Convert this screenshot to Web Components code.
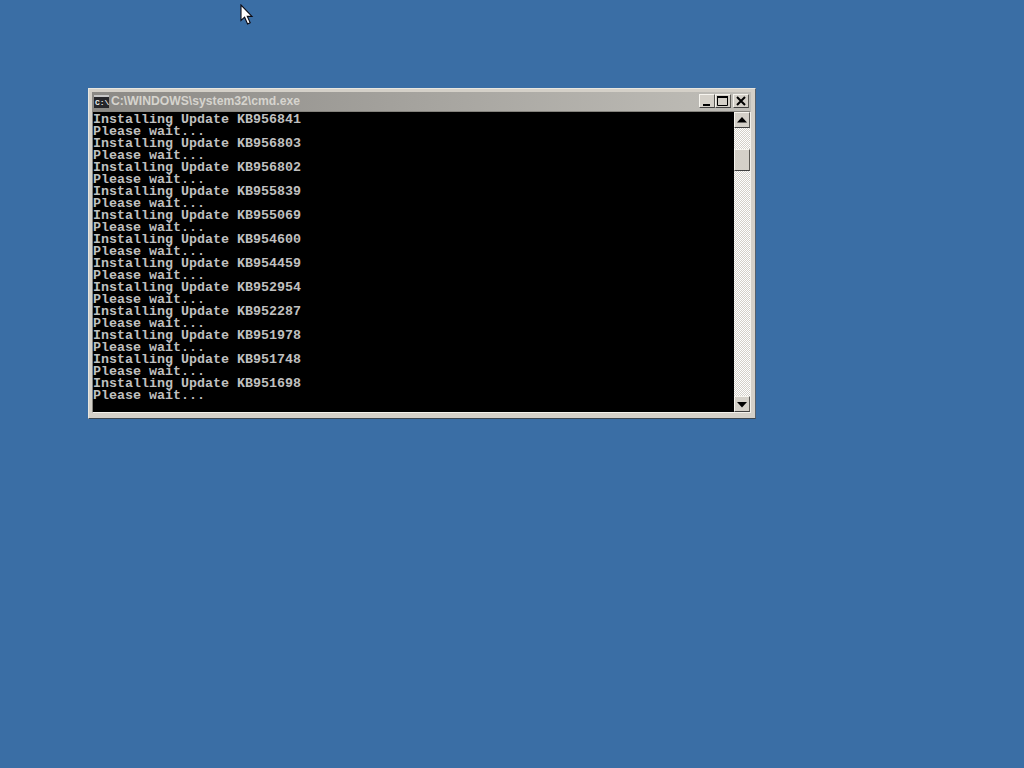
<!DOCTYPE html>
<html>
<head>
<meta charset="utf-8">
<title>cmd.exe</title>
<style>
  html, body { margin: 0; height: 100%; background: #3a6ea5; overflow: hidden; }
</style>
</head>
<body>
<desktop-screen>
  <cmd-window title-text="C:\WINDOWS\system32\cmd.exe">
    <console-line>Installing Update KB956841</console-line>
    <console-line>Please wait...</console-line>
    <console-line>Installing Update KB956803</console-line>
    <console-line>Please wait...</console-line>
    <console-line>Installing Update KB956802</console-line>
    <console-line>Please wait...</console-line>
    <console-line>Installing Update KB955839</console-line>
    <console-line>Please wait...</console-line>
    <console-line>Installing Update KB955069</console-line>
    <console-line>Please wait...</console-line>
    <console-line>Installing Update KB954600</console-line>
    <console-line>Please wait...</console-line>
    <console-line>Installing Update KB954459</console-line>
    <console-line>Please wait...</console-line>
    <console-line>Installing Update KB952954</console-line>
    <console-line>Please wait...</console-line>
    <console-line>Installing Update KB952287</console-line>
    <console-line>Please wait...</console-line>
    <console-line>Installing Update KB951978</console-line>
    <console-line>Please wait...</console-line>
    <console-line>Installing Update KB951748</console-line>
    <console-line>Please wait...</console-line>
    <console-line>Installing Update KB951698</console-line>
    <console-line>Please wait...</console-line>
  </cmd-window>
</desktop-screen>
<script>
class DesktopScreen extends HTMLElement {
  constructor() {
    super();
    this.attachShadow({mode: 'open'}).innerHTML = `
      <style>
        :host { display: block; position: relative; width: 1024px; height: 768px; background: #3a6ea5; overflow: hidden; }
        ::slotted(cmd-window) { position: absolute; left: 88px; top: 88px; }
        svg { position: absolute; left: 240px; top: 4px; }
      </style>
      <slot></slot>
      <svg width="14" height="22" viewBox="0 0 14 22">
        <path d="M1 1 V16.5 L4.6 13.2 L7.6 20 L10.2 18.8 L7.3 12.4 H12 Z" fill="#fff" stroke="#0a0a14" stroke-width="1.1"/>
      </svg>`;
  }
}

class CmdWindow extends HTMLElement {
  constructor() {
    super();
    this.attachShadow({mode: 'open'}).innerHTML = `
      <style>
        :host { display: block; width: 668px; height: 331px; box-sizing: border-box; background: #d4d0c8; padding: 3px 4px 4px 3px;
          border: 1px solid; border-color: #e8e6e0 #55606c #3c4650 #e8e6e0; }
        .title { height: 19px; display: flex; align-items: center; gap: 2px; box-sizing: border-box; padding: 0 2px 0 2px;
          background: linear-gradient(90deg, #8b8985, #c0beb8); }
        .title span { flex: 1; font: bold 12.2px "Liberation Sans", sans-serif; color: #d6d4ce; white-space: nowrap; margin-top: -1px; }
        .buttons { display: flex; margin-top: -1px; }
        .buttons win-button:last-child { margin-left: 2px; }
        .body { display: flex; height: 302px; box-sizing: border-box; border: 1px solid; border-color: #85837d #f4f2ec #f4f2ec #85837d; }
        .console { flex: 1; background: #000; padding: 2px 0 0 0; overflow: hidden; }
      </style>
      <div class="title">
        <svg width="15" height="13" viewBox="0 0 15 13">
          <rect width="15" height="13" fill="#26262a"/>
          <rect y="0" width="15" height="2" fill="#c8c8c8"/>
          <text x="1" y="10" font-family="Liberation Mono, monospace" font-size="8" font-weight="bold" fill="#eee">C:\\</text>
        </svg>
        <span></span>
        <div class="buttons">
          <win-button kind="min"></win-button>
          <win-button kind="max"></win-button>
          <win-button kind="close"></win-button>
        </div>
      </div>
      <div class="body">
        <div class="console"><slot></slot></div>
        <scroll-track></scroll-track>
      </div>`;
  }

  connectedCallback() {
    this.shadowRoot.querySelector('span').textContent = this.getAttribute('title-text');
  }
}

const GLYPHS = {
  min: '<rect x="3" y="10" width="7" height="2" fill="#000"/>',
  max: '<path d="M1.5 2.5h10v9h-10z" fill="none" stroke="#000"/><rect x="1" y="2" width="11" height="2" fill="#000"/>',
  close: '<path d="M3 3l8 8M11 3l-8 8" stroke="#000" stroke-width="2" fill="none"/>',
  up: '<path d="M7 4l5 5.5h-10z" fill="#000"/>',
  down: '<path d="M7 10.5l-5-5.5h10z" fill="#000"/>',
};

class WinButton extends HTMLElement {
  constructor() {
    super();
    this.attachShadow({mode: 'open'});
  }

  connectedCallback() {
    const kind = this.getAttribute('kind');
    const big = kind === 'up' || kind === 'down' || kind === 'thumb';
    this.shadowRoot.innerHTML = `
      <style>
        :host { display: block; box-sizing: border-box; width: 16px; height: ${big ? 16 : 14}px; background: #d4d0c8;
          border: 1px solid; border-color: #f6f4ee #5c5a55 #404040 #f6f4ee; }
        svg { display: block; margin: ${big ? 0 : -1}px 0 0 0; }
      </style>
      <svg width="14" height="14" viewBox="0 0 14 14">${GLYPHS[kind] || ''}</svg>`;
  }
}

class ScrollTrack extends HTMLElement {
  constructor() {
    super();
    this.attachShadow({mode: 'open'}).innerHTML = `
      <style>
        :host { display: flex; flex-direction: column; width: 16px; flex: none;
          background: repeating-conic-gradient(#d4d0c8 0 25%, #fff 0 50%) 0 0 / 2px 2px; }
        .gap { height: 21px; }
        .rest { flex: 1; }
      </style>
      <win-button kind="up"></win-button>
      <div class="gap"></div>
      <win-button kind="thumb" style="height:22px"></win-button>
      <div class="rest"></div>
      <win-button kind="down"></win-button>`;
  }
}

class ConsoleLine extends HTMLElement {
  constructor() {
    super();
    this.attachShadow({mode: 'open'}).innerHTML = `<style>
        :host { display: block; height: 12px; font: bold 13.33px/12px "Liberation Mono", monospace; color: #c0c0c0; }
      </style><slot></slot>`;
  }
}

customElements.define('win-button', WinButton);
customElements.define('scroll-track', ScrollTrack);
customElements.define('console-line', ConsoleLine);
customElements.define('cmd-window', CmdWindow);
customElements.define('desktop-screen', DesktopScreen);
</script>
</body>
</html>
